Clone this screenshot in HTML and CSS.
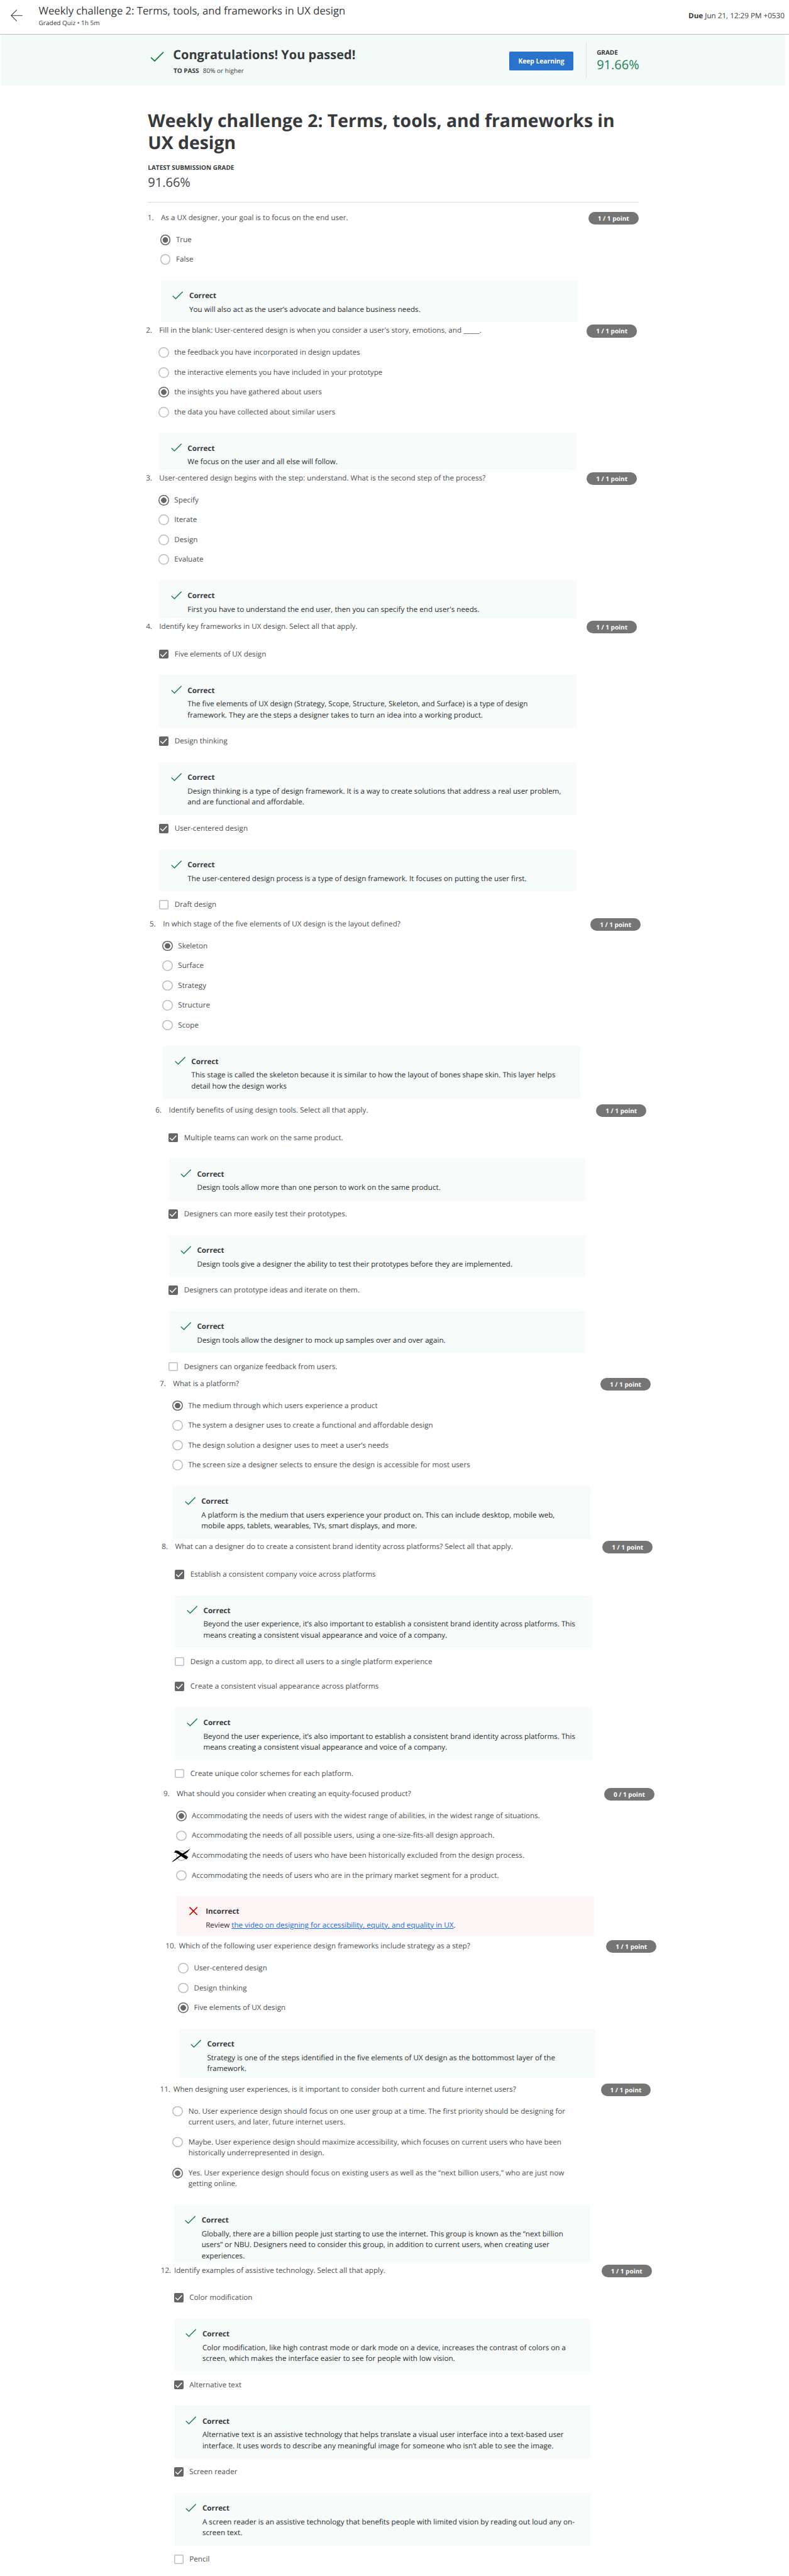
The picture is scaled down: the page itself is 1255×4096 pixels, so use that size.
FILE: index.html
```html
<!DOCTYPE html>
<html lang="en">
<head>
<meta charset="utf-8">
<title>Weekly challenge 2: Terms, tools, and frameworks in UX design</title>
<link rel="stylesheet" href="styles.css">
</head>
<body>
<svg class="sprite" aria-hidden="true">
  <symbol id="tick" viewBox="0 0 26 20"><path d="M1 11.2 8.2 18 25 1" fill="none" stroke="#1f8354" stroke-width="2.3"/></symbol>
  <symbol id="cross" viewBox="0 0 20 20"><path d="M.8.8 19.2 19.2M19.2.8.8 19.2" fill="none" stroke="#d30001" stroke-width="2.4"/></symbol>
  <symbol id="box-tick" viewBox="0 0 22 22"><path d="M3.2 11.2 8.6 16.4 18.6 5.6" fill="none" stroke="#fff" stroke-width="2.3"/></symbol>
</svg>

<header class="topbar">
  <svg class="back" viewBox="0 0 28 29"><path d="M28 14.5H1.5M14.5 1 1.2 14.5 14.5 28" fill="none" stroke="#373a3c" stroke-width="1.6"/></svg>
  <div class="topbar-text">
    <div class="topbar-title">Weekly challenge 2: Terms, tools, and frameworks in UX design</div>
    <div class="topbar-sub">Graded Quiz • 1h 5m</div>
  </div>
  <div class="due"><b>Due</b> Jun 21, 12:29 PM +0530</div>
</header>

<section class="banner">
  <svg class="banner-tick"><use href="#tick"/></svg>
  <div class="banner-text">
    <div class="banner-title">Congratulations! You passed!</div>
    <div class="banner-sub"><b>TO PASS</b><span>80% or higher</span></div>
  </div>
  <button class="keep">Keep Learning</button>
  <div class="banner-grade">
    <div class="label">GRADE</div>
    <div class="score">91.66%</div>
  </div>
</section>

<main>
  <div class="intro">
    <h1>Weekly challenge 2: Terms, tools, and frameworks in<br>UX design</h1>
    <div class="label">LATEST SUBMISSION GRADE</div>
    <div class="score">91.66%</div>
    <div class="rule"></div>
  </div>

  <div class="quiz">
    <section class="question q1">
      <div class="head"><span class="num">1.</span><p>As a UX designer, your goal is to focus on the end user.</p><span class="pill">1 / 1 point</span></div>
      <div class="options">
        <div class="opt"><i class="radio on"></i><p>True</p></div>
        <div class="opt"><i class="radio"></i><p>False</p></div>
      </div>
      <div class="feedback"><svg><use href="#tick"/></svg><div><h4>Correct</h4><p>You will also act as the user’s advocate and balance business needs.</p></div></div>
    </section>

    <section class="question q2">
      <div class="head"><span class="num">2.</span><p>Fill in the blank: User-centered design is when you consider a user's story, emotions, and _____.</p><span class="pill">1 / 1 point</span></div>
      <div class="options">
        <div class="opt"><i class="radio"></i><p>the feedback you have incorporated in design updates</p></div>
        <div class="opt"><i class="radio"></i><p>the interactive elements you have included in your prototype</p></div>
        <div class="opt"><i class="radio on"></i><p>the insights you have gathered about users</p></div>
        <div class="opt"><i class="radio"></i><p>the data you have collected about similar users</p></div>
      </div>
      <div class="feedback"><svg><use href="#tick"/></svg><div><h4>Correct</h4><p>We focus on the user and all else will follow.</p></div></div>
    </section>

    <section class="question q3">
      <div class="head"><span class="num">3.</span><p>User-centered design begins with the step: understand. What is the second step of the process?</p><span class="pill">1 / 1 point</span></div>
      <div class="options">
        <div class="opt"><i class="radio on"></i><p>Specify</p></div>
        <div class="opt"><i class="radio"></i><p>Iterate</p></div>
        <div class="opt"><i class="radio"></i><p>Design</p></div>
        <div class="opt"><i class="radio"></i><p>Evaluate</p></div>
      </div>
      <div class="feedback"><svg><use href="#tick"/></svg><div><h4>Correct</h4><p>First you have to understand the end user, then you can specify the end user's needs.</p></div></div>
    </section>

    <section class="question multi q4">
      <div class="head"><span class="num">4.</span><p>Identify key frameworks in UX design. Select all that apply.</p><span class="pill">1 / 1 point</span></div>
      <div class="opt"><i class="check on"><svg><use href="#box-tick"/></svg></i><p>Five elements of UX design</p></div>
      <div class="feedback"><svg><use href="#tick"/></svg><div><h4>Correct</h4><p>The five elements of UX design (Strategy, Scope, Structure, Skeleton, and Surface) is a type of design<br>framework. They are the steps a designer takes to turn an idea into a working product.</p></div></div>
      <div class="opt"><i class="check on"><svg><use href="#box-tick"/></svg></i><p>Design thinking</p></div>
      <div class="feedback"><svg><use href="#tick"/></svg><div><h4>Correct</h4><p>Design thinking is a type of design framework. It is a way to create solutions that address a real user problem,<br>and are functional and affordable.</p></div></div>
      <div class="opt"><i class="check on"><svg><use href="#box-tick"/></svg></i><p>User-centered design</p></div>
      <div class="feedback"><svg><use href="#tick"/></svg><div><h4>Correct</h4><p>The user-centered design process is a type of design framework. It focuses on putting the user first.</p></div></div>
      <div class="opt"><i class="check"></i><p>Draft design</p></div>
    </section>

    <section class="question q5">
      <div class="head"><span class="num">5.</span><p>In which stage of the five elements of UX design is the layout defined?</p><span class="pill">1 / 1 point</span></div>
      <div class="options">
        <div class="opt"><i class="radio on"></i><p>Skeleton</p></div>
        <div class="opt"><i class="radio"></i><p>Surface</p></div>
        <div class="opt"><i class="radio"></i><p>Strategy</p></div>
        <div class="opt"><i class="radio"></i><p>Structure</p></div>
        <div class="opt"><i class="radio"></i><p>Scope</p></div>
      </div>
      <div class="feedback"><svg><use href="#tick"/></svg><div><h4>Correct</h4><p>This stage is called the skeleton because it is similar to how the layout of bones shape skin. This layer helps<br>detail how the design works</p></div></div>
    </section>

    <section class="question multi q6">
      <div class="head"><span class="num">6.</span><p>Identify benefits of using design tools. Select all that apply.</p><span class="pill">1 / 1 point</span></div>
      <div class="opt"><i class="check on"><svg><use href="#box-tick"/></svg></i><p>Multiple teams can work on the same product.</p></div>
      <div class="feedback"><svg><use href="#tick"/></svg><div><h4>Correct</h4><p>Design tools allow more than one person to work on the same product.</p></div></div>
      <div class="opt"><i class="check on"><svg><use href="#box-tick"/></svg></i><p>Designers can more easily test their prototypes.</p></div>
      <div class="feedback"><svg><use href="#tick"/></svg><div><h4>Correct</h4><p>Design tools give a designer the ability to test their prototypes before they are implemented.</p></div></div>
      <div class="opt"><i class="check on"><svg><use href="#box-tick"/></svg></i><p>Designers can prototype ideas and iterate on them.</p></div>
      <div class="feedback"><svg><use href="#tick"/></svg><div><h4>Correct</h4><p>Design tools allow the designer to mock up samples over and over again.</p></div></div>
      <div class="opt"><i class="check"></i><p>Designers can organize feedback from users.</p></div>
    </section>

    <section class="question q7">
      <div class="head"><span class="num">7.</span><p>What is a platform?</p><span class="pill">1 / 1 point</span></div>
      <div class="options">
        <div class="opt"><i class="radio on"></i><p>The medium through which users experience a product</p></div>
        <div class="opt"><i class="radio"></i><p>The system a designer uses to create a functional and affordable design</p></div>
        <div class="opt"><i class="radio"></i><p>The design solution a designer uses to meet a user’s needs</p></div>
        <div class="opt"><i class="radio"></i><p>The screen size a designer selects to ensure the design is accessible for most users</p></div>
      </div>
      <div class="feedback"><svg><use href="#tick"/></svg><div><h4>Correct</h4><p>A platform is the medium that users experience your product on. This can include desktop, mobile web,<br>mobile apps, tablets, wearables, TVs, smart displays, and more.</p></div></div>
    </section>

    <section class="question multi q8">
      <div class="head"><span class="num">8.</span><p>What can a designer do to create a consistent brand identity across platforms? Select all that apply.</p><span class="pill">1 / 1 point</span></div>
      <div class="opt"><i class="check on"><svg><use href="#box-tick"/></svg></i><p>Establish a consistent company voice across platforms</p></div>
      <div class="feedback"><svg><use href="#tick"/></svg><div><h4>Correct</h4><p>Beyond the user experience, it’s also important to establish a consistent brand identity across platforms. This<br>means creating a consistent visual appearance and voice of a company.</p></div></div>
      <div class="opt"><i class="check"></i><p>Design a custom app, to direct all users to a single platform experience</p></div>
      <div class="opt"><i class="check on"><svg><use href="#box-tick"/></svg></i><p>Create a consistent visual appearance across platforms</p></div>
      <div class="feedback"><svg><use href="#tick"/></svg><div><h4>Correct</h4><p>Beyond the user experience, it’s also important to establish a consistent brand identity across platforms. This<br>means creating a consistent visual appearance and voice of a company.</p></div></div>
      <div class="opt"><i class="check"></i><p>Create unique color schemes for each platform.</p></div>
    </section>

    <section class="question q9">
      <div class="head"><span class="num">9.</span><p>What should you consider when creating an equity-focused product?</p><span class="pill">0 / 1 point</span></div>
      <div class="options">
        <div class="opt"><i class="radio on"></i><p>Accommodating the needs of users with the widest range of abilities, in the widest range of situations.</p></div>
        <div class="opt"><i class="radio"></i><p>Accommodating the needs of all possible users, using a one-size-fits-all design approach.</p></div>
        <div class="opt"><i class="radio"><svg class="scribble" viewBox="45 50 136 100"><path d="M63 80 73 65 90 67 108 78 164 112 150 130 138 122 88 88 76 82ZM48 144 88 112 112 94 145 74 178 52 160 76 134 94 104 111 72 134 52 147Z"/></svg></i><p>Accommodating the needs of users who have been historically excluded from the design process.</p></div>
        <div class="opt"><i class="radio"></i><p>Accommodating the needs of users who are in the primary market segment for a product.</p></div>
      </div>
      <div class="feedback wrong"><svg><use href="#cross"/></svg><div><h4>Incorrect</h4><p>Review <a>the video on designing for accessibility, equity, and equality in UX</a>.</p></div></div>
    </section>

    <section class="question q10">
      <div class="head"><span class="num">10.</span><p>Which of the following user experience design frameworks include strategy as a step?</p><span class="pill">1 / 1 point</span></div>
      <div class="options">
        <div class="opt"><i class="radio"></i><p>User-centered design</p></div>
        <div class="opt"><i class="radio"></i><p>Design thinking</p></div>
        <div class="opt"><i class="radio on"></i><p>Five elements of UX design</p></div>
      </div>
      <div class="feedback"><svg><use href="#tick"/></svg><div><h4>Correct</h4><p>Strategy is one of the steps identified in the five elements of UX design as the bottommost layer of the<br>framework.</p></div></div>
    </section>

    <section class="question q11">
      <div class="head"><span class="num">11.</span><p>When designing user experiences, is it important to consider both current and future internet users?</p><span class="pill">1 / 1 point</span></div>
      <div class="options">
        <div class="opt"><i class="radio"></i><p>No. User experience design should focus on one user group at a time. The first priority should be designing for<br>current users, and later, future internet users.</p></div>
        <div class="opt"><i class="radio"></i><p>Maybe. User experience design should maximize accessibility, which focuses on current users who have been<br>historically underrepresented in design.</p></div>
        <div class="opt"><i class="radio on"></i><p>Yes. User experience design should focus on existing users as well as the “next billion users,” who are just now<br>getting online.</p></div>
      </div>
      <div class="feedback"><svg><use href="#tick"/></svg><div><h4>Correct</h4><p>Globally, there are a billion people just starting to use the internet. This group is known as the “next billion<br>users” or NBU. Designers need to consider this group, in addition to current users, when creating user<br>experiences.</p></div></div>
    </section>

    <section class="question multi q12">
      <div class="head"><span class="num">12.</span><p>Identify examples of assistive technology. Select all that apply.</p><span class="pill">1 / 1 point</span></div>
      <div class="opt"><i class="check on"><svg><use href="#box-tick"/></svg></i><p>Color modification</p></div>
      <div class="feedback"><svg><use href="#tick"/></svg><div><h4>Correct</h4><p>Color modification, like high contrast mode or dark mode on a device, increases the contrast of colors on a<br>screen, which makes the interface easier to see for people with low vision.</p></div></div>
      <div class="opt"><i class="check on"><svg><use href="#box-tick"/></svg></i><p>Alternative text</p></div>
      <div class="feedback"><svg><use href="#tick"/></svg><div><h4>Correct</h4><p>Alternative text is an assistive technology that helps translate a visual user interface into a text-based user<br>interface. It uses words to describe any meaningful image for someone who isn’t able to see the image.</p></div></div>
      <div class="opt"><i class="check on"><svg><use href="#box-tick"/></svg></i><p>Screen reader</p></div>
      <div class="feedback"><svg><use href="#tick"/></svg><div><h4>Correct</h4><p>A screen reader is an assistive technology that benefits people with limited vision by reading out loud any on-<br>screen text.</p></div></div>
      <div class="opt"><i class="check"></i><p>Pencil</p></div>
    </section>
  </div>
</main>
</body>
</html>
```
FILE: styles.css
```css
/* 1rem is ten design units */
html {
  font-size: 6.6755px;
}

* {
  box-sizing: border-box;
}

body {
  margin: 0;
  background: #fff;
  color: #373a3c;
  font: 1.75rem/2.625rem "Open Sans", "Noto Sans", sans-serif;
  text-rendering: geometricPrecision;
  overflow-x: hidden;
}

h1, h4, p {
  margin: 0;
  white-space: nowrap;
}

svg {
  display: block;
  flex: none;
}

.sprite {
  position: absolute;
  width: 0;
  height: 0;
}

/* Top bar */
.topbar {
  display: flex;
  align-items: flex-start;
  height: 8.3rem;
  padding: 0.9rem 1.07rem 0 2.6rem;
  border-bottom: 1px solid #bdbdbd;
}

.back {
  width: 2.8rem;
  height: 2.9rem;
  margin: 1.4rem 3.83rem 0 0;
}

.topbar-text {
  flex: 1;
}

.topbar-title {
  font-size: 2.5rem;
  line-height: 3.37rem;
}

.topbar-sub {
  font-size: 1.5rem;
  line-height: 2.25rem;
}

.due {
  margin-top: 1.58rem;
}

/* Result banner */
.banner {
  display: flex;
  align-items: flex-start;
  height: 12rem;
  margin: 0 0.95rem 0 0.24rem;
  padding: 1.8rem 0 0 35.6rem;
  background: #f4faf8;
}

.banner-tick {
  width: 3.3rem;
  height: 2.5rem;
  margin-top: 2.15rem;
}

.banner-text {
  width: 80.1rem;
  padding: 0.97rem 0 0 2.1rem;
}

.banner-title {
  font-size: 3rem;
  font-weight: 700;
  line-height: 4rem;
}

.banner-sub {
  display: flex;
  gap: 0.95rem;
  margin-top: 0.66rem;
  padding-left: 0.1rem;
  font-size: 1.5rem;
  line-height: 2.25rem;
}

.keep {
  width: 15.3rem;
  height: 4.5rem;
  margin: 2.2rem 2.95rem 0 2.1rem;
  padding: 0;
  border: 0;
  border-radius: 0.25rem;
  background: #2a73cc;
  color: #fff;
  font: 700 1.54rem/4.5rem "Open Sans", "Noto Sans", sans-serif;
}

.banner-grade {
  height: 8.5rem;
  padding: 1.3rem 0 0 2.45rem;
  border-left: 1px solid #dde2e2;
}

.label {
  font-size: 1.5rem;
  font-weight: 700;
  line-height: 2.25rem;
}

.score {
  color: #45484a;
  font-size: 3rem;
  line-height: 4rem;
}

.banner-grade .score {
  color: #1f8354;
  line-height: 3.45rem;
}

/* Quiz intro */
.intro {
  width: 116.9rem;
  margin-left: 35.25rem;
  padding-top: 5.92rem;
}

h1 {
  margin-bottom: 2.01rem;
  font-size: 4.25rem;
  font-weight: 700;
  line-height: 5.25rem;
}

.intro .score {
  margin-top: 0.53rem;
}

.rule {
  height: 2.38rem;
  margin-top: 2.59rem;
  border-top: 1px solid #ddd;
}

/* Questions */
.quiz {
  display: grid;
  grid-template-rows: 26.9rem 35.12rem 35.4rem 70.79rem 44.41rem 65.1rem 38.9rem 58.82rem 36.28rem 34.09rem 43.1rem 73.5rem;
}

.question {
  width: 116.97rem;
}

.q1 { margin-left: 35.17rem; }
.q2, .q3, .q4 { margin-left: 34.78rem; }
.q5 { margin-left: 35.67rem; }
.q6 { margin-left: 37.04rem; }
.q7 { margin-left: 38.05rem; }
.q8 { margin-left: 38.54rem; }
.q9 { margin-left: 38.94rem; }
.q10 { margin-left: 39.44rem; }
.q11 { margin-left: 38.12rem; }
.q12 { margin-left: 38.31rem; }

.head {
  display: grid;
  grid-template-columns: 3.17rem 1fr 11.95rem;
  height: 3rem;
  padding-top: 0.08rem;
  color: #4c4f51;
}

/* Optical centring of text in its line */
.num, .question p, .question h4 {
  padding-top: 0.07rem;
  margin-bottom: -0.07rem;
}

.pill {
  height: 3rem;
  margin-top: -0.08rem;
  border-radius: 1.5rem;
  background: #757575;
  color: #fff;
  font-size: 1.5rem;
  font-weight: 700;
  line-height: 3.05rem;
  text-align: center;
}

.options {
  display: flex;
  flex-direction: column;
  gap: 2.1rem;
  margin-top: 2.3rem;
}

.opt {
  display: flex;
  align-items: flex-start;
  color: #4c4f51;
  padding-left: 3rem;
}

.radio {
  position: relative;
  flex: none;
  width: 2.5rem;
  height: 2.5rem;
  margin: 0.08rem 1.27rem 0 0;
  border-radius: 50%;
  box-shadow: inset 0 0 0 0.23rem #bdbdbd;
}

.radio.on {
  background: radial-gradient(circle, #666 0.6rem, transparent 0.7rem);
  box-shadow: inset 0 0 0 0.23rem #666;
}

.scribble {
  position: absolute;
  top: -0.47rem;
  left: -1rem;
  width: 4.53rem;
  height: 3.33rem;
}

.check {
  flex: none;
  width: 2.2rem;
  height: 2.2rem;
  margin: 0.21rem 1.45rem 0 0;
  border-radius: 0.3rem;
  box-shadow: inset 0 0 0 0.22rem #bdbdbd;
}

.check.on {
  background: #666;
  box-shadow: none;
}

.check svg {
  width: 2.2rem;
  height: 2.2rem;
}

.multi .opt {
  padding-left: 3.17rem;
}

.multi .head + .opt {
  margin-top: 3.6rem;
}

.multi .feedback + .opt {
  margin-top: 1.94rem;
}

.multi .opt + .opt {
  margin-top: 3.29rem;
}

.feedback {
  display: flex;
  align-items: flex-start;
  width: 99.4rem;
  height: 9.95rem;
  margin: 3.67rem 0 0 3.17rem;
  padding: 2.38rem 0 0 2.75rem;
  background: #f7fbfa;
  color: #2a2c2e;
}

.feedback:has(br) {
  height: 12.55rem;
}

.q2 .feedback { height: 8.7rem; }
.q3 .feedback { height: 9.03rem; }
.q9 .feedback { height: 9.39rem; }
.q10 .feedback { height: 11.68rem; }
.q11 .feedback { height: 13.63rem; }

.feedback svg {
  width: 2.6rem;
  height: 2rem;
  margin: 0.15rem 1.4rem 0 0;
}

.question h4 {
  margin-bottom: 0.55rem;
  color: #373a3c;
  font-size: 1.75rem;
  font-weight: 700;
}

.wrong {
  background: #fdf5f6;
}

.wrong svg {
  width: 2rem;
  margin: 0.2rem 1.85rem 0 0.3rem;
}

.feedback a {
  color: #0f6fe8;
  text-decoration: underline;
}
```
